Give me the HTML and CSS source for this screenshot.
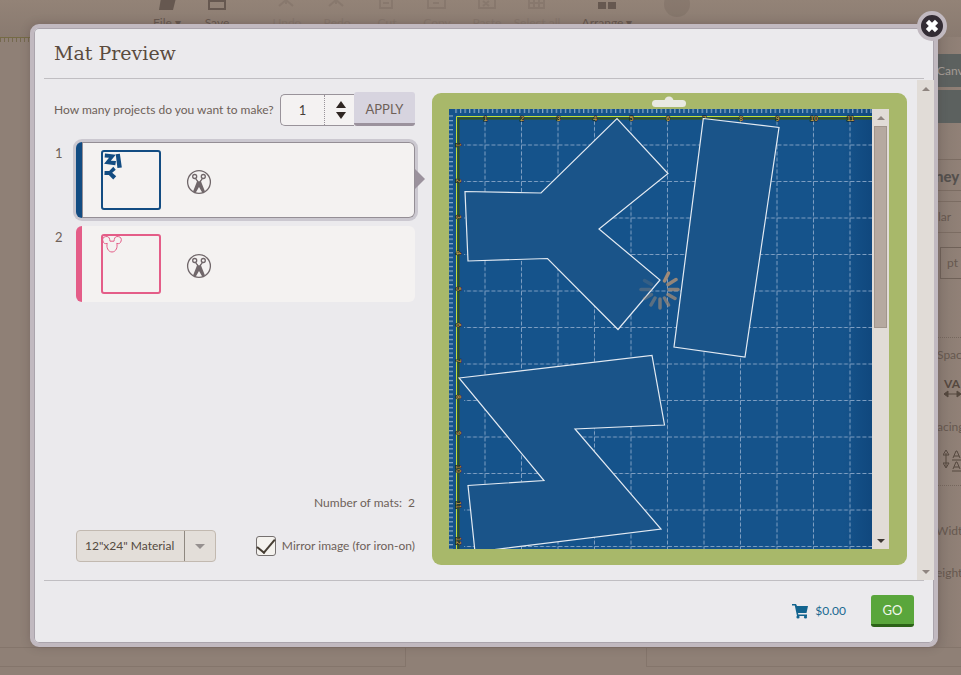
FILE: index.html
```html
<!DOCTYPE html>
<html lang="en">
<head>
<meta charset="utf-8">
<title>Mat Preview</title>
<link rel="stylesheet" href="styles.css">
</head>
<body>
<div class="app">
  <div class="toolbar">
    <div class="tool"><svg width="24" height="12"><path d="M6-2h15l-3 12H4z"/></svg><span>File ▾</span></div>
    <div class="tool"><svg width="24" height="12"><path class="line" d="M4-4h16V9H4z M4 1h16"/></svg><span>Save</span></div>
    <div class="tool gap faint"><svg width="24" height="12"><path class="line" d="M4 6 11 0l7 6M11 0v4"/></svg><span>Undo</span></div>
    <div class="tool faint"><svg width="24" height="12"><path class="line" d="M4 6 11 0l7 6M11 0v4"/></svg><span>Redo</span></div>
    <div class="tool faint"><svg width="24" height="12"><path class="line" d="M5-2h12V8H5z M8 3h6"/></svg><span>Cut</span></div>
    <div class="tool faint"><svg width="24" height="12"><path class="line" d="M3-2h17V8H3z M8 3h6"/></svg><span>Copy</span></div>
    <div class="tool faint"><svg width="24" height="12"><path class="line" d="M4-2h16V8H4z M8 1l6 5M14 1 8 6"/></svg><span>Paste</span></div>
    <div class="tool faint"><svg width="24" height="12"><path class="line" d="M4-2h15V8H4z M9-2V8M14-2V8M4 3h15"/></svg><span>Select all</span></div>
    <div class="tool arrange"><svg width="24" height="12"><path d="M3 2h8v7H3z M13 2h8v7h-8z"/></svg><span>Arrange ▾</span></div>
    <div class="tool faint"><svg width="28" height="18"><circle cx="14" cy="4" r="13"/><path class="line" d="M18 0c-4-4-8 0-8 3s4 7 8 3"/></svg></div>
  </div>
  <div class="workspace">
    <div class="canvas"></div>
    <aside class="panel">
      <div class="tab">Canv</div>
      <div class="tab second"></div>
      <div class="row font">ney</div>
      <div class="row style">lar</div>
      <div class="row unit">pt</div>
      <div class="row label space">Spac</div>
      <div class="glyph"><svg width="18" height="22"><path d="M1 15h16M1 15l4-3v6zM18 15l-4-3v6z"/><text x="1" y="9">VA</text></svg></div>
      <div class="row label line-space">acing</div>
      <div class="glyph last"><svg width="18" height="24"><path d="M3 4v14M3 1 0 6h6zM3 19l-3-5h6zM9 11h9M9 22h9M10 9l3-7h1l3 7M11 7h5M10 20l3-7h1l3 7M11 18h5" /></svg></div>
      <div class="row label size">Width</div>
      <div class="row label size">eight</div>
    </aside>
  </div>
  <div class="layers"><i></i><i></i></div>
</div>

<div class="overlay">
<section class="modal" role="dialog" aria-labelledby="title">
  <button class="close" type="button" aria-label="Close"><svg width="16" height="16" viewBox="0 0 14 14"><path d="M3 3l8 8M11 3l-8 8"/></svg></button>
  <header class="head"><h1 id="title">Mat Preview</h1></header>
  <div class="body">
    <div class="settings">
      <form class="projects">
        <label for="count">How many projects do you want to make?</label>
        <div class="stepper">
          <input id="count" type="number" value="1">
          <span class="steps">
            <button type="button" aria-label="More"><svg width="10" height="7"><path d="M5 0l5 7H0z"/></svg></button>
            <button type="button" aria-label="Fewer"><svg width="10" height="7"><path d="M0 0h10L5 7z"/></svg></button>
          </span>
        </div>
        <button class="apply" type="button">APPLY</button>
      </form>
      <ol class="mats">
        <li>
          <span class="num">1</span>
          <div class="card blue selected">
            <svg class="thumb" width="60" height="60" viewBox="0 0 60 60"><rect class="frame" x="1" y="1" width="58" height="58" rx="2"/>
              <path class="solid" transform="translate(2.500 30) scale(.058 -.060)" d="M16 82.500 92 84 168 9.500 219 64.500 150 120 211 171 169 220.500 98.500 149.500 19 152zM240 199.500 316 208.500 282 438 211 428zM10 269 203 246.500 215.500 316 126 320 212 420 26 443 19 376.500 95 371.500z"/></svg>
            <svg class="scissors" width="26" height="26" viewBox="0 0 26 26"><circle cx="13" cy="13" r="11.400"/><circle cx="8.700" cy="7.500" r="2"/><circle cx="17.300" cy="7.500" r="2"/><path d="M9.500 9.300 13.500 15M16.500 9.300 12.500 15"/><path class="blade" d="M11.500 11 13 13l1.500-2 1.500 4 3 7.500-2.800 1L13 18l-3.200 5.500-2.800-1L10 15z"/></svg>
          </div>
        </li>
        <li>
          <span class="num">2</span>
          <div class="card pink">
            <svg class="thumb" width="60" height="60" viewBox="0 0 60 60"><rect class="frame" x="1" y="1" width="58" height="58" rx="2"/>
              <path class="thin" d="M6.300 9.400A3.500 3.500 0 1 1 8.700 5.500L9 7.200h4l.3-1.700A3.500 3.500 0 1 1 15.700 9.400C17 13 15 18 11 18S5 13 6.300 9.400z"/></svg>
            <svg class="scissors" width="26" height="26" viewBox="0 0 26 26"><circle cx="13" cy="13" r="11.400"/><circle cx="8.700" cy="7.500" r="2"/><circle cx="17.300" cy="7.500" r="2"/><path d="M9.500 9.300 13.500 15M16.500 9.300 12.500 15"/><path class="blade" d="M11.500 11 13 13l1.500-2 1.500 4 3 7.500-2.800 1L13 18l-3.200 5.500-2.800-1L10 15z"/></svg>
          </div>
        </li>
      </ol>
      <p class="total">Number of mats:&nbsp; 2</p>
      <div class="options">
        <span class="material"><select aria-label="Material size"><option>12"x24" Material</option></select></span>
        <label class="mirror"><input type="checkbox" checked><span>Mirror image (for iron-on)</span></label>
      </div>
    </div>
    <div class="mat">
      <svg class="hanger" width="36" height="12" viewBox="0 0 36 12"><rect x="1" y="4" width="34" height="7" rx="3.500"/><circle cx="18" cy="5" r="4.500"/></svg>
      <div class="view">
        <svg class="sheet" viewBox="0 0 423 440" preserveAspectRatio="xMinYMin slice">
          <defs>
            <pattern id="grid" width="36.500" height="36.500" patternUnits="userSpaceOnUse"><path d="M36 0v36.500M0 36h36.500"/></pattern>
            <pattern id="across" width="4.560" height="5" patternUnits="userSpaceOnUse"><path d="M2.500 0v4"/></pattern>
            <pattern id="down" width="5" height="4.560" patternUnits="userSpaceOnUse"><path d="M0 2.500h4"/></pattern>
            <linearGradient id="edge"><stop offset="0" stop-color="#0b3c70" stop-opacity="0"/><stop offset="1" stop-color="#0b3c70" stop-opacity=".5"/></linearGradient>
          </defs>
          <rect class="paper" width="423" height="440"/>
          <rect x="395" width="28" height="440" fill="url(#edge)"/>
          <rect x="15" y="12" width="408" height="428" fill="url(#grid)"/>
          <rect x="4" width="419" height="4" fill="url(#across)"/>
          <rect y="4" width="4" height="436" fill="url(#down)"/>
          <path class="shade" d="M9.500 440V9.500H423"/>
          <path class="border" d="M7.500 440V7.500H423"/>
          <g class="marks" id="marks"></g>
          <path class="piece" d="M16 82.500 92 84 168 9.500 219 64.500 150 120 211 171 169 220.500 98.500 149.500 19 152z"/>
          <path class="piece" d="M254.300 9.500 330 18.500 296 248 225 238z"/>
          <path class="piece" d="M10 269 203 246.500 215.500 316 126 320 212 420 26 443 19 376.500 95 371.500z"/>
          <g class="spinner">
            <path d="M215.500 172l4-8"/><path d="M219 175.500l8-5" opacity=".9"/><path d="M220 180.500h9" opacity=".8"/><path d="M219 185.500l7 4" opacity=".75"/><path d="M215.500 189l4 7" opacity=".7"/><path d="M211 190v9" opacity=".65"/><path d="M206 189l-4 7" opacity=".5"/><path d="M202.500 185.500l-7 4" opacity=".4"/><path d="M201 180.500h-9" opacity=".35"/><path d="M202.500 175.500l-7-4" opacity=".2"/>
          </g>
        </svg>
        <div class="scroll inner"><i class="up"></i><b></b><i class="down"></i></div>
      </div>
    </div>
    <div class="scroll outer"><i class="up"></i><i class="down"></i></div>
  </div>
  <footer class="foot">
    <a class="cart" href="#"><svg width="16" height="15" viewBox="0 0 16 15"><path d="M0 0h4l1 2h11l-1.500 7H6l.3 1.500H15V12H5L2.800 1.500H0z"/><circle cx="6" cy="13" r="1.600"/><circle cx="13.500" cy="13" r="1.600"/></svg>$0.00</a>
    <button class="go" type="button">GO</button>
  </footer>
</section>
</div>
<script src="marks.js"></script>
</body>
</html>
```
FILE: styles.css
```css
* { box-sizing: border-box; }
body {
  margin: 0;
  min-height: 100vh;
  display: grid;
  overflow: hidden;
  background: #8f8076;
  color: #6e6159;
  font: 12px/18px Lato, sans-serif;
}
button, input, select { font: inherit; color: inherit; margin: 0; }
button { border: 0; padding: 0; cursor: pointer; }
svg { display: block; }
.app, .overlay { grid-area: 1 / 1; min-width: 0; }

/* dimmed editor */
.app { display: flex; flex-direction: column; color: #66584f; overflow: hidden; }
.toolbar { height: 37px; padding-left: 142px; display: flex; align-items: flex-start; background: linear-gradient(#938377, #897a70); overflow: hidden; }
.tool { width: 50px; display: flex; flex-direction: column; align-items: center; gap: 2px; white-space: nowrap; }
.tool svg { fill: #665850; overflow: hidden; }
.tool .line { fill: none; stroke: #665850; stroke-width: 2; }
.gap { margin-left: 20px; }
.arrange { margin-left: 20px; }
.arrange + .tool { margin-left: 20px; }
.faint { opacity: .22; }
.workspace { flex: 1; display: flex; min-height: 0; }
.canvas { flex: 1; height: 5px; background: repeating-linear-gradient(90deg, #75694f 0 1px, transparent 1px 4px); border-top: 1px solid #756b45; }
.panel { flex: 0 0 27px; padding-top: 17px; overflow: hidden; white-space: nowrap; background: linear-gradient(90deg, #877970, #918177); }
.tab { height: 33px; padding: 8px 0 0 3px; background: #5c615f; color: #a39b94; }
.second { margin-top: 3px; }
.row { padding-left: 4px; }
.font { margin-top: 36px; height: 32px; padding: 7px 0 0 1px; border: solid #7b6c62; border-width: 1px 0; font-weight: 900; font-size: 15px; color: #54504d; }
.style { margin-top: 10px; height: 32px; padding: 6px 0 0 4px; border: solid #7b6c62; border-width: 1px 0; }
.unit { margin: 14px 0 0 6px; height: 32px; padding: 6px 0 0 6px; border: 1px solid #6f6158; border-right: 0; }
.space { margin-top: 58px; padding: 8px 0 0 3px; border-top: 1px dotted #75675d; }
.glyph { padding: 15px 0 0 9px; }
.glyph svg { fill: #55483f; stroke: #55483f; }
.glyph text { font: bold 12px Lato, sans-serif; stroke: none; }
.last svg { fill: none; }
.line-space { margin-top: 17px; padding-left: 3px; }
.last { padding-top: 13px; height: 50px; border-bottom: 1px dotted #75675d; }
.size { padding-left: 2px; margin-top: 24px; }
.last + .size { margin-top: 36px; }
.layers { flex: 0 0 28px; display: flex; border-top: 1px solid #84756b; gap: 240px; }
.layers i { flex: 0 0 406px; height: 19px; border: solid #84756b; border-width: 0 1px 1px 0; }
.layers i + i { flex: 1; border-width: 0 0 1px 1px; }

/* dialog */
.overlay { display: flex; padding: 24px 23px 28px 30px; }
.modal {
  position: relative;
  flex: 1;
  min-width: 0;
  display: flex;
  flex-direction: column;
  border: 4px solid #c1b9c0;
  border-radius: 9px;
  background: #ebeaed;
  box-shadow: inset 0 0 0 1px #aaa4ac, 0 0 10px rgba(60, 40, 50, .25);
}
.close {
  position: absolute;
  top: -17px;
  right: -13px;
  width: 30px;
  height: 30px;
  display: grid;
  place-items: center;
  border: 4px solid #c1b9c0;
  border-radius: 50%;
  background: #332c34;
}
.close path { stroke: #fff; stroke-width: 4; }
.head { margin: 0 10px; padding: 12px 10px 0; height: 51px; border-bottom: 1px solid #c0bec2; }
h1 { margin: 0; font: 19px/26px "DejaVu Serif", serif; color: #5b4b3e; }
.body { flex: 1; display: flex; min-height: 0; margin-top: 1px; padding-left: 20px; }
.settings { flex: 0 0 361px; display: flex; flex-direction: column; padding: 12px 0 18px; }
.projects { display: flex; align-items: flex-start; }
.projects label { flex: 1; padding-top: 9px; white-space: nowrap; }
.stepper { display: flex; width: 74px; height: 32px; margin-top: 2px; border: 1px solid #99939a; border-right: 0; border-radius: 5px 0 0 5px; background: #f4f2f2; }
.stepper input { width: 44px; padding: 0; border: 0; border-right: 1px dotted #99939a; background: none; text-align: center; appearance: textfield; font-size: 13px; color: #473e39; }
.stepper input::-webkit-inner-spin-button { appearance: none; }
.steps { flex: 1; display: flex; flex-direction: column; align-items: center; justify-content: center; gap: 4px; padding-left: 2px; fill: #2f2623; }
.steps button { background: none; }
.apply { width: 61px; height: 34px; padding-top: 3px; border-bottom: 3px solid #9b929d; border-radius: 3px; background: #d7d4df; font-size: 13px; }
.mats { margin: 16px 0 0; padding: 0; list-style: none; display: flex; flex-direction: column; gap: 8px; }
.mats li { display: flex; }
.num { width: 22px; padding: 2px 1px; font-size: 13px; }
.card { position: relative; flex: 1; height: 76px; display: flex; align-items: center; gap: 25px; padding-left: 19px; border-radius: 6px; border-left: 6px solid; background: #f4f2f1; }
.blue { color: #124c82; border-left-color: #124c82; }
.pink { color: #e45d88; border-left-color: #e45d88; }
.selected { box-shadow: inset 0 0 0 1px #948e95, 0 0 0 3px #cbc8d0; }
.selected::after { content: ""; position: absolute; right: -10px; top: 27px; border: solid transparent; border-width: 10px 0 10px 10px; border-left-color: #9b929d; }
.thumb { fill: none; stroke: currentColor; }
.frame { stroke-width: 2; }
.solid { fill: currentColor; stroke: none; }
.scissors { margin-top: 4px; fill: none; stroke: #70676a; stroke-width: 1.3; }
.blade { fill: #70676a; stroke: none; }
.total { margin: auto 0 18px; text-align: right; }
.options { display: flex; justify-content: space-between; align-items: center; padding-left: 22px; }
.material { position: relative; width: 140px; }
.material::before { content: ""; position: absolute; right: 31px; top: 1px; bottom: 1px; width: 1px; background: #8f8880; }
.material::after { content: ""; position: absolute; right: 11px; top: 14px; border: solid transparent; border-width: 5px 5px 0; border-top-color: #96908f; }
select { display: block; width: 100%; height: 32px; padding: 0 8px; appearance: none; border: 1px solid #c2b9b0; border-radius: 4px; background: #e3ded9; color: #544a41; }
.mirror { display: flex; align-items: center; gap: 6px; white-space: nowrap; }
.mirror input { appearance: none; width: 20px; height: 20px; border: 1px solid #75706f; border-radius: 3px; background: #f4f2ee; display: grid; place-items: center; }
.mirror input::after { content: ""; width: 8px; height: 16px; border: solid #453d33; border-width: 0 2px 2px 0; transform: translateY(-2px) rotate(40deg); }

/* cutting mat */
.mat { position: relative; flex: 1; min-width: 0; margin: 13px 10px 15px 17px; padding: 16px 18px 16px 17px; border-radius: 9px; background: #a8b86a; }
.hanger { position: absolute; top: 3px; left: 50%; margin-left: -19px; fill: #e9e9e2; }
.view { display: flex; height: 100%; }
.sheet { flex: 1; min-width: 0; height: 100%; }
.paper { fill: #15538b; }
pattern path { stroke: #a2bbd4; stroke-width: 1; }
#grid path { stroke: #7f9fc2; stroke-dasharray: 4 2; }
.shade { fill: none; stroke: #35501f; stroke-width: 2; }
.border { fill: none; stroke: #c2df3a; }
.marks text { font: bold 7px "Liberation Sans", sans-serif; fill: #b89a48; stroke: #111a20; stroke-width: 1; paint-order: stroke; text-anchor: middle; }
.piece { fill: #1a5489; stroke: #e3eaf2; stroke-width: 1.2; }
.spinner { stroke: #a18b78; stroke-width: 3.5; stroke-linecap: round; }
.scroll { flex: 0 0 17px; display: flex; flex-direction: column; align-items: center; background: #e1dcd7; }
.scroll i { border: 4px solid transparent; }
.scroll .up { border-top: 0; border-bottom-color: #8f8580; margin: 7px 0 6px; }
.scroll .down { border-bottom: 0; border-top-color: #8f8580; margin: auto 0 6px; }
.inner b { width: 13px; flex: 0 0 46%; background: #b5a9a0; border: 1px solid #a1958c; }
.inner .down { border-top-color: #3d3733; }

.foot { height: 63px; margin: 0 10px; padding: 14px 10px 0; border-top: 1px solid #c0bec2; display: flex; justify-content: flex-end; gap: 25px; }
.cart { display: flex; gap: 7px; height: 32px; align-items: center; color: #1a6991; text-decoration: none; }
.cart svg { fill: #12648f; }
.go { width: 43px; height: 32px; border-bottom: 3px solid #2c6218; border-radius: 3px; background: #5aa63c; color: #f2f8ee; font-size: 13px; }
```
FILE: marks.js
```js
// Inch numbers along the top and left rulers of the mat.
const marks = document.getElementById('marks');
function mark(value, transform) {
  const text = document.createElementNS('http://www.w3.org/2000/svg', 'text');
  text.textContent = value;
  text.setAttribute('transform', transform);
  marks.append(text);
}
for (let i = 1; i <= 11; i++) mark(i, `translate(${i * 36.5} 12)`);
for (let i = 1; i <= 12; i++) mark(i, `translate(7 ${i * 36}) rotate(90)`);
```
